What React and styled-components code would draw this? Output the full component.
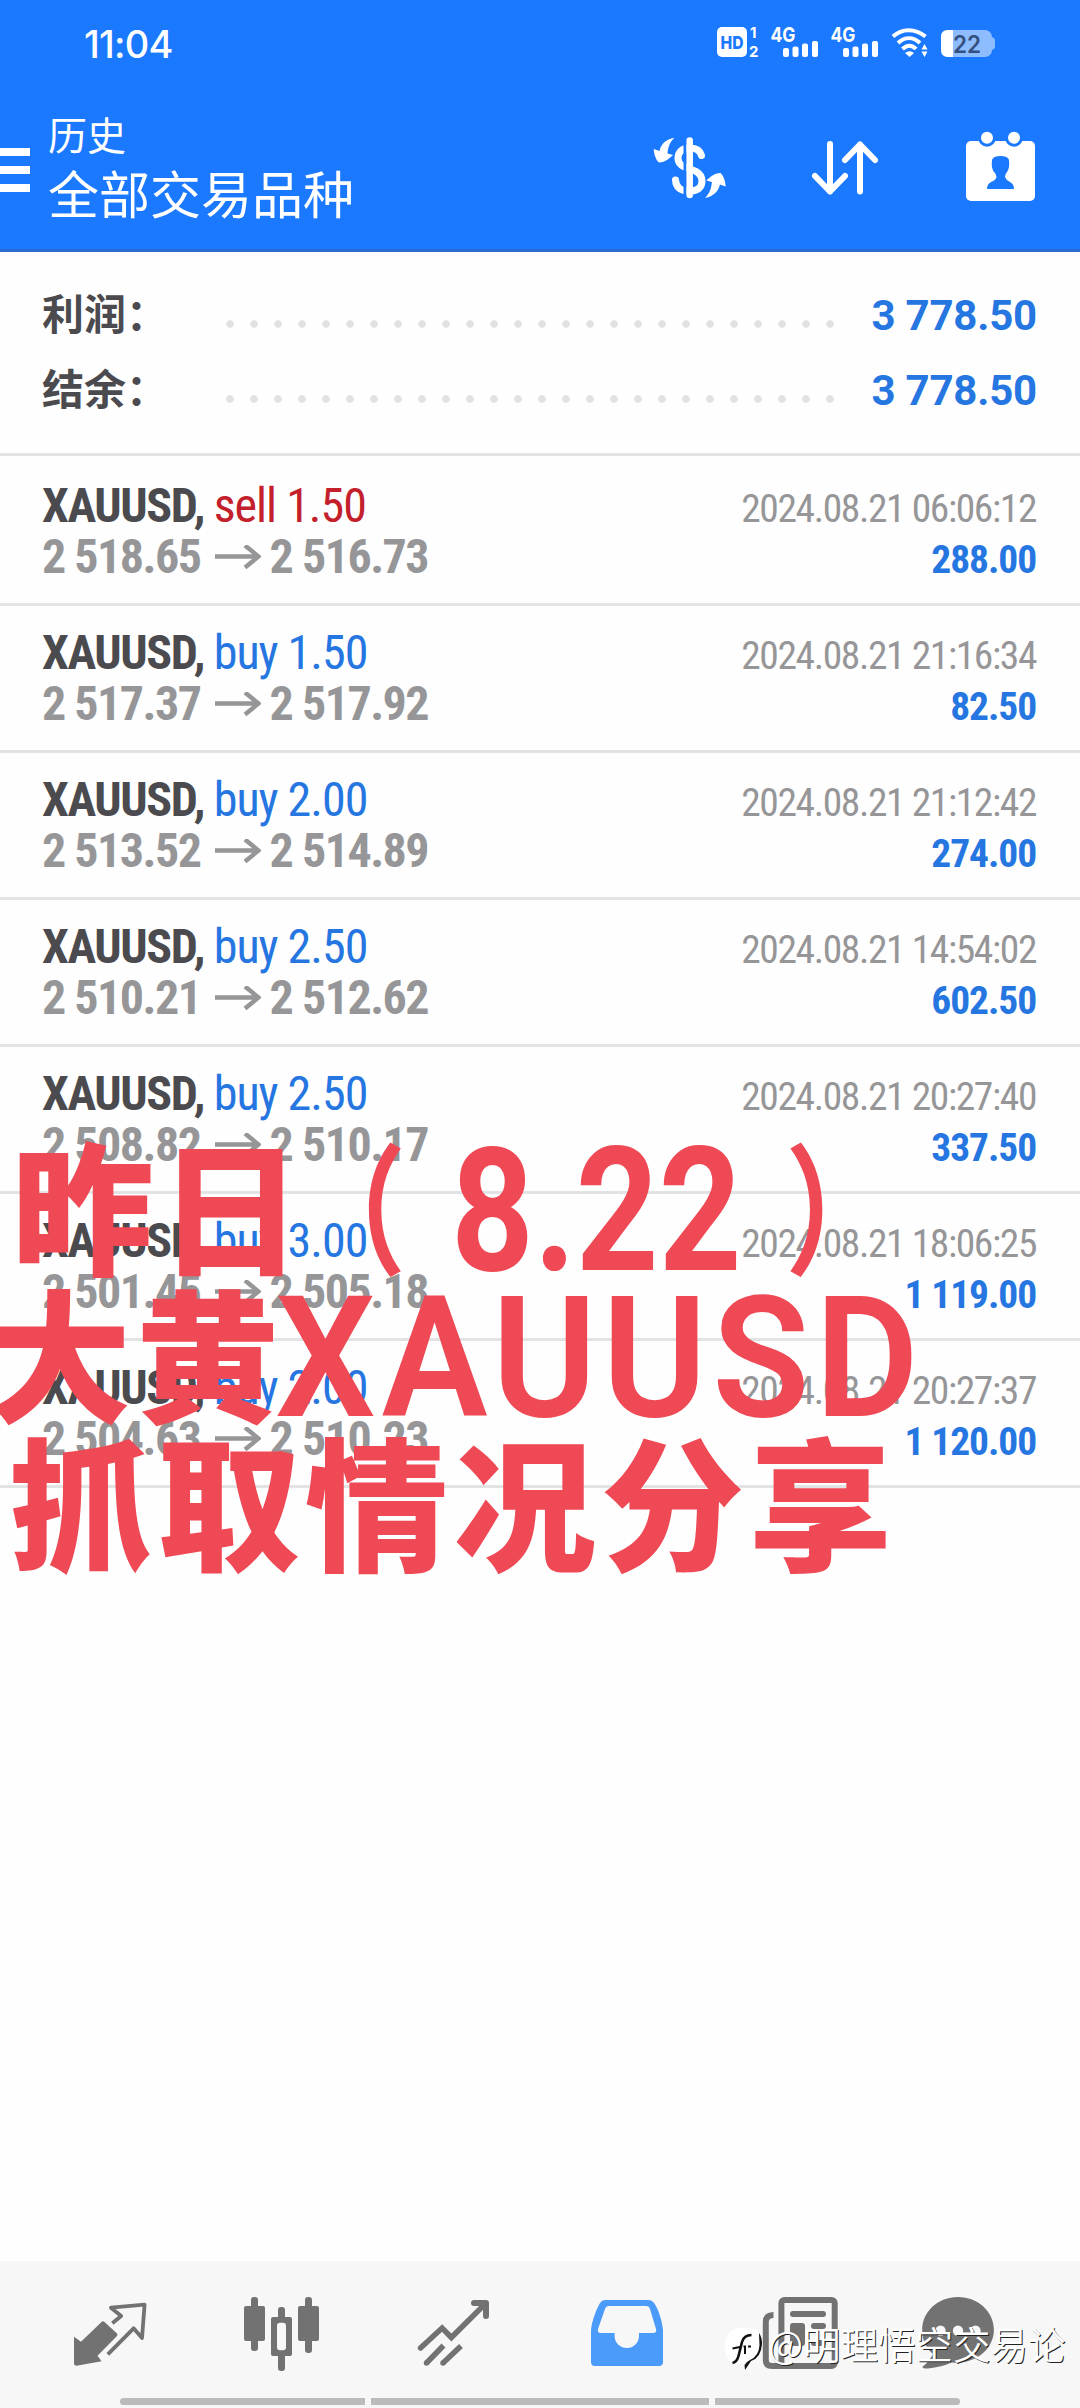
import styled, { createGlobalStyle } from 'styled-components';

const GlobalStyle = createGlobalStyle`
  * {
    box-sizing: border-box;
  }
  body {
    margin: 0;
    background: #fefefe;
    font-family: Roboto, "Noto Sans CJK SC", sans-serif;
  }
  svg {
    display: block;
  }
`;

const Page = styled.div`
  position: relative;
  display: flex;
  flex-direction: column;
  width: 1080px;
  height: 2408px;
  overflow: hidden;
`;

const Header = styled.header`
  height: 252px;
  background: #1b79ff;
  border-bottom: 3px solid #2a6bd0;
  color: #fff;
`;

const StatusBar = styled.div`
  display: flex;
  align-items: center;
  height: 88px;
  padding: 0 84px 0 84px;
`;

const Clock = styled.span`
  margin-right: auto;
  font-family: Inter, sans-serif;
  font-size: 38px;
  font-weight: 500;
  letter-spacing: -0.8px;
`;

const StatusIcons = styled.div`
  display: flex;
  gap: 10px;
`;

const Toolbar = styled.div`
  display: flex;
  align-items: flex-start;
  height: 161px;
  padding-right: 40px;
`;

const MenuButton = styled.div`
  display: flex;
  flex-direction: column;
  gap: 10px;
  width: 30px;
  margin: 60px 18px 0 0;
`;

const MenuBar = styled.span`
  height: 8px;
  background: #fff;
`;

const Titles = styled.div`
  flex: 1;
  padding-top: 24px;
`;

const Subtitle = styled.div`
  font-size: 39px;
  line-height: 50px;
`;

const Title = styled.div`
  font-size: 51px;
  line-height: 69px;
`;

const Actions = styled.div`
  display: flex;
  gap: 75px;
  padding-top: 38px;
`;

const Summary = styled.section`
  height: 204px;
  padding: 26px 43px 0 42px;
  border-bottom: 3px solid #e3e3e3;
`;

const SummaryRow = styled.div`
  display: flex;
  align-items: center;
  height: 75px;
`;

const SummaryLabel = styled.span`
  width: 176px;
  padding-bottom: 9px;
  font-size: 42px;
  font-weight: 600;
  color: #4b4b4f;
`;

const Dots = styled.span`
  width: 624px;
  height: 24px;
  margin-top: 16px;
  background: radial-gradient(circle, #e2e2e4 3.4px, transparent 4.2px) 0 0 / 24px 24px;
`;

const SummaryValue = styled.span`
  flex: 1;
  text-align: right;
  font-size: 42px;
  font-weight: 700;
  letter-spacing: -0.2px;
  color: #2676e2;
`;

const Deal = styled.article`
  height: ${(p) => (p.$first ? 150 : 147)}px;
  padding: ${(p) => (p.$first ? 24 : 21)}px 44px 0 42px;
  border-bottom: 3px solid #e3e3e3;
  font-stretch: 75%;
`;

const DealLine = styled.div`
  display: flex;
  justify-content: space-between;
  align-items: baseline;
  height: 51px;
  line-height: 51px;
  letter-spacing: -1.4px;
  white-space: pre;
`;

const Symbol = styled.span`
  font-size: 48px;
  font-weight: 700;
  letter-spacing: -1.4px;
  color: #4b4b4f;
`;

const Side = styled.span`
  font-size: 48px;
  font-weight: 400;
  letter-spacing: -1px;
  color: ${(p) => (p.$sell ? '#c4202b' : '#2676e2')};
`;

const Prices = styled.span`
  display: flex;
  align-items: baseline;
  font-size: 48px;
  font-weight: 700;
  letter-spacing: -1.5px;
  color: #969698;
`;

const ArrowIcon = styled.svg`
  margin: 0 9px 0 14px;
`;

const DealTime = styled.span`
  font-size: 39.5px;
  color: #969698;
`;

const Profit = styled.span`
  font-size: 39.5px;
  font-weight: 700;
  letter-spacing: -1.1px;
  color: #2676e2;
`;

const Caption = styled.div`
  position: absolute;
  top: 1128px;
  left: -12px;
  color: #ef4955;
`;

const CaptionLine = styled.div`
  display: flex;
  height: 148px;
  line-height: 148px;
  white-space: pre;
`;

const Hanzi = styled.span`
  margin-left: ${(p) => p.$indent || 0}px;
  font-family: "Noto Sans CJK SC", sans-serif;
  font-size: 143px;
  font-weight: 900;
  letter-spacing: 5px;
`;

const Paren = styled.span`
  width: 140px;
  margin-left: ${(p) => p.$shift || 0}px;
  font-family: "Noto Sans CJK SC", sans-serif;
  font-size: 140px;
  font-weight: 600;
  transform: scaleX(0.78);
`;

const Latin = styled.span`
  width: ${(p) => p.$width}px;
  margin-left: ${(p) => p.$shift || 0}px;
  font-family: Roboto, sans-serif;
  font-size: ${(p) => p.$size}px;
  font-weight: ${(p) => p.$weight || 600};
  letter-spacing: ${(p) => p.$spacing || 0}px;
  transform: translateY(9px) scaleX(${(p) => p.$squeeze});
  transform-origin: left;
`;

const Nav = styled.nav`
  display: grid;
  grid-template-columns: 172px 172px 172px 173px 173px 144px;
  justify-items: center;
  height: 137px;
  margin-top: auto;
  padding: 35px 50px 0 24px;
  background: #f7f7f7;
`;

const GestureBar = styled.div`
  display: grid;
  grid-template-columns: 245px 338px 245px;
  gap: 6px;
  height: 10px;
  padding: 0 120px 3px;
  background: #f7f7f7;
`;

const GestureSegment = styled.span`
  background: #bbb;
  &:first-child {
    border-radius: 4px 0 0 4px;
  }
  &:last-child {
    border-radius: 0 4px 4px 0;
  }
`;

const Watermark = styled.div`
  position: absolute;
  left: 724px;
  top: 2318px;
  display: flex;
  align-items: flex-start;
  height: 54px;
  font-family: "Noto Sans CJK SC", sans-serif;
  font-size: 37.5px;
  font-weight: 350;
  line-height: 50px;
  color: #fff;
  text-shadow: 1px 1px 0 #222;
  white-space: nowrap;
`;

const deals = [
  { side: 'sell', lots: '1.50', open: '2 518.65', close: '2 516.73', time: '2024.08.21 06:06:12', profit: '288.00' },
  { side: 'buy', lots: '1.50', open: '2 517.37', close: '2 517.92', time: '2024.08.21 21:16:34', profit: '82.50' },
  { side: 'buy', lots: '2.00', open: '2 513.52', close: '2 514.89', time: '2024.08.21 21:12:42', profit: '274.00' },
  { side: 'buy', lots: '2.50', open: '2 510.21', close: '2 512.62', time: '2024.08.21 14:54:02', profit: '602.50' },
  { side: 'buy', lots: '2.50', open: '2 508.82', close: '2 510.17', time: '2024.08.21 20:27:40', profit: '337.50' },
  { side: 'buy', lots: '3.00', open: '2 501.45', close: '2 505.18', time: '2024.08.21 18:06:25', profit: '1 119.00' },
  { side: 'buy', lots: '2.00', open: '2 504.63', close: '2 510.23', time: '2024.08.21 20:27:37', profit: '1 120.00' },
];

const HdIcon = () => (
  <svg width="45" height="40" viewBox="0 0 45 40" fill="#fff" fontFamily="Inter, sans-serif">
    <rect x="2" y="3" width="30" height="30" rx="5" />
    <text x="5.5" y="24.5" fontSize="18" fontWeight="800" fill="#1b79ff" textLength="23" lengthAdjust="spacingAndGlyphs">HD</text>
    <text x="35" y="14" fontSize="15" fontWeight="700">1</text>
    <text x="34" y="33" fontSize="15" fontWeight="700">2</text>
  </svg>
);

const SignalIcon = () => (
  <svg width="50" height="40" viewBox="0 0 50 40" fill="#fff">
    <text x="0.5" y="17.5" fontSize="20" fontWeight="700" fontFamily="Inter, sans-serif" textLength="25" lengthAdjust="spacingAndGlyphs">4G</text>
    <rect x="13" y="24" width="6" height="9" rx="2" />
    <rect x="22.5" y="22.5" width="6" height="10.5" rx="2" />
    <rect x="32" y="19.5" width="6" height="13.5" rx="2" />
    <rect x="42" y="17" width="6" height="16" rx="2" />
  </svg>
);

const WifiIcon = () => (
  <svg width="40" height="40" viewBox="0 0 40 40" fill="none" stroke="#fff" strokeWidth="4">
    <path d="M3 12.5C12 4 25 4 35.5 12.5" />
    <path d="M8 19C15 12.5 23 12.5 30 19" />
    <path d="M12.5 25C17 20.5 22 20.5 26 25" />
    <path d="M15 29Q19.5 25.5 24 29L19.5 33z" fill="#fff" stroke="none" />
    <path d="M31.5 25.5L34.5 20L37.5 25.5zM31.5 27.5L34.5 33L37.5 27.5z" fill="#fff" stroke="none" />
  </svg>
);

const BatteryIcon = () => (
  <svg width="56" height="40" viewBox="0 0 56 40">
    <rect x="1" y="6" width="51" height="27" rx="7" fill="#8dbcff" />
    <path d="M52 13q3 1 3 3v7q0 2-3 3z" fill="#8dbcff" />
    <path d="M13 6H8Q1 6 1 13V26Q1 33 8 33H13z" fill="#fff" />
    <text x="13" y="28.5" fontSize="24" fontWeight="600" fill="#34507f" fontFamily="Inter, sans-serif" textLength="28" lengthAdjust="spacingAndGlyphs">22</text>
  </svg>
);

const CurrencyIcon = () => (
  <svg width="80" height="84" viewBox="0 -4 80 84" fill="#fff">
    <path d="M51.5 25.5C50 20 45 18 40 18C31 18 28 23 28 28C28 35 34 37 40 39C47 41 52 44 52 51C52 58 47 61 40 61C31 61 26 58 25.5 50" fill="none" stroke="#fff" strokeWidth="7" strokeLinecap="round" />
    <path d="M35 8V68" stroke="#1b79ff" strokeWidth="3" />
    <path d="M39.7 10.5V65" stroke="#fff" strokeWidth="6.5" strokeLinecap="round" />
    <path id="turn" d="M24.3 7.7C16 9 11 14 9.5 21L3.7 19C4 26 7 31 9 32.5C14 32.5 19 29 23 25L17.5 23.5C18 17 20 12 24.3 7.7z" />
    <use href="#turn" transform="rotate(180 39.7 37.8)" />
  </svg>
);

const SortIcon = () => (
  <svg width="80" height="84" viewBox="0 -4 80 84" fill="none" stroke="#fff" strokeWidth="6" strokeLinecap="round" strokeLinejoin="round">
    <path d="M25 14V61.5M10 46L25 61.5L40 46" />
    <path d="M55 61.5V14.5M40 30L55 14.5L70 30" />
  </svg>
);

const CalendarIcon = () => (
  <svg width="80" height="84" viewBox="0 0 80 84" fill="#fff">
    <rect x="6" y="15" width="69" height="60" rx="5" />
    <circle cx="27" cy="11.7" r="9" fill="#1b79ff" />
    <circle cx="54" cy="11.7" r="9" fill="#1b79ff" />
    <circle cx="27" cy="11.7" r="6" />
    <circle cx="54" cy="11.7" r="6" />
    <path d="M32 34Q33 30 40.5 30T49 34Q50 42 47 46Q45 48 45 51Q46 54 50 56Q54 58 54 63H27Q27 58 31 56Q36 54 36.5 51Q36.5 48 34 46Q31 42 32 34z" fill="#1b79ff" />
  </svg>
);

const PriceArrow = () => (
  <ArrowIcon width="46" height="28" viewBox="0 0 46 28" fill="none" stroke="#969698" strokeWidth="4.5">
    <path d="M0 11.5H43M30 0.5L43.5 11.5L30 22.5" />
  </ArrowIcon>
);

const QuotesIcon = () => (
  <svg width="76" height="76" viewBox="0 0 76 76">
    <path d="M40.3 27.3L49.2 20L38.9 11.7L72.6 8.7L70 42L61.6 32.3L35.8 58.3" fill="none" stroke="#727272" strokeWidth="3.8" strokeLinejoin="round" />
    <path d="M2 40.7L9 45.7L29.5 26Q31 24.5 32.5 26L45 37.5Q46 39 45 40L25.5 59.7L29.6 65.3L4.4 69.7Q2 69.7 2 67z" fill="#727272" />
  </svg>
);

const ChartIcon = () => (
  <svg width="76" height="76" viewBox="0 0 76 76" fill="#727272">
    <rect x="0" y="10" width="21" height="35" rx="2" />
    <rect x="7" y="1" width="7" height="54" rx="3" />
    <rect x="34" y="11" width="7" height="64" rx="3" />
    <rect x="27" y="21" width="21" height="39" rx="2" />
    <rect x="33" y="26.7" width="9" height="27.5" rx="3" fill="#f7f7f7" />
    <rect x="54" y="10" width="21" height="35" rx="2" />
    <rect x="61" y="1" width="7" height="56" rx="3" />
  </svg>
);

const TradeIcon = () => (
  <svg width="76" height="76" viewBox="0 0 76 76" fill="none" stroke="#727272" strokeWidth="5.5">
    <path d="M4.5 52L26.1 32L35.4 41.5L69 8" strokeLinecap="round" />
    <path d="M58 7H70V20" strokeWidth="6" strokeLinecap="round" strokeLinejoin="round" />
    <path d="M10.5 67L27.5 49.5M27 67L45 50" />
    <path d="M10.5 67h.01M27 67h.01" strokeLinecap="round" />
  </svg>
);

const HistoryIcon = () => (
  <svg width="76" height="76" viewBox="0 0 76 76">
    <path d="M2 66V34C3 24 8 12 11 7q2-3 5-3H59q4 0 6 3C69 12 73 24 74 34V66q0 4-4 4H6q-4 0-4-4z" fill="#4b9bfb" />
    <path d="M20 10H57q3 0 4 3L67 33q1 4-3 4H50V40a12.2 12 0 0 1-24.4 0V37H12q-4 0-3-4L16 13q1-3 4-3z" fill="#f7f7f7" />
  </svg>
);

const NewsIcon = () => (
  <svg width="76" height="76" viewBox="0 0 76 76" fill="#727272">
    <path d="M11.5 19Q3.8 19 3.8 26V64Q3.8 70 10 70H66" fill="none" stroke="#727272" strokeWidth="6" />
    <rect x="19.4" y="4" width="53.3" height="66" rx="3" fill="#f7f7f7" stroke="#727272" strokeWidth="6" />
    <rect x="28" y="15" width="36" height="6" rx="3" />
    <rect x="28" y="27" width="15" height="23" rx="3" />
    <rect x="49" y="27" width="15" height="6" rx="3" />
    <rect x="49" y="44" width="15" height="6" rx="3" />
  </svg>
);

const ChatIcon = () => (
  <svg width="76" height="76" viewBox="0 0 76 76" fill="#727272">
    <path d="M38 1C18 1 2.2 15.5 2.2 34C2.2 44 6 52 13 58Q9 66 2.2 71Q3 73 8 72.5Q22 71 31.5 66.5C55 69 73.9 53 73.9 34C73.9 15.5 58 1 38 1z" />
    <circle cx="20.5" cy="34.7" r="5.2" fill="#f7f7f7" />
    <circle cx="38" cy="34.7" r="5.2" fill="#f7f7f7" />
    <circle cx="55.5" cy="34.7" r="5.2" fill="#f7f7f7" />
  </svg>
);

const WatermarkLogo = () => (
  <svg width="44" height="54" viewBox="0 0 44 54">
    <path d="M16 10H26Q38 11 38 25Q38 40 28 43L21 51V46H14Q1 45 1 29Q1 11 16 10z" fill="#fff" />
    <path d="M35 15Q38 19 38 26Q37 40 27 43L21 52L20.5 47Q22 44 26 42Q35 38 35.5 27Z" fill="#111" />
    <path d="M8.5 45Q13 44 14.5 38L18 24Q20 17 27.5 17" fill="none" stroke="#111" strokeWidth="2.6" />
    <path d="M8.5 30.5L16 29M19.5 28.5H21V36M24 28.5H27" fill="none" stroke="#111" strokeWidth="2" />
  </svg>
);

const DealRow = ({ deal, first }) => (
  <Deal $first={first}>
    <DealLine>
      <span>
        <Symbol>XAUUSD, </Symbol>
        <Side $sell={deal.side === 'sell'}>{deal.side} {deal.lots}</Side>
      </span>
      <DealTime>{deal.time}</DealTime>
    </DealLine>
    <DealLine>
      <Prices>
        {deal.open}
        <PriceArrow />
        {deal.close}
      </Prices>
      <Profit>{deal.profit}</Profit>
    </DealLine>
  </Deal>
);

const App = () => {
  return (
    <>
      <GlobalStyle />
      <Page>
        <Header>
          <StatusBar>
            <Clock>11:04</Clock>
            <StatusIcons>
              <HdIcon />
              <SignalIcon />
              <SignalIcon />
              <WifiIcon />
              <BatteryIcon />
            </StatusIcons>
          </StatusBar>
          <Toolbar>
            <MenuButton>
              <MenuBar />
              <MenuBar />
              <MenuBar />
            </MenuButton>
            <Titles>
              <Subtitle>历史</Subtitle>
              <Title>全部交易品种</Title>
            </Titles>
            <Actions>
              <CurrencyIcon />
              <SortIcon />
              <CalendarIcon />
            </Actions>
          </Toolbar>
        </Header>

        <Summary>
          <SummaryRow>
            <SummaryLabel>利润：</SummaryLabel>
            <Dots />
            <SummaryValue>3 778.50</SummaryValue>
          </SummaryRow>
          <SummaryRow>
            <SummaryLabel>结余：</SummaryLabel>
            <Dots />
            <SummaryValue>3 778.50</SummaryValue>
          </SummaryRow>
        </Summary>

        {deals.map((deal, i) => (
          <DealRow key={i} deal={deal} first={i === 0} />
        ))}

        <Nav>
          <QuotesIcon />
          <ChartIcon />
          <TradeIcon />
          <HistoryIcon />
          <NewsIcon />
          <ChatIcon />
        </Nav>
        <GestureBar>
          <GestureSegment />
          <GestureSegment />
          <GestureSegment />
        </GestureBar>

        <Caption>
          <CaptionLine>
            <Hanzi $indent={23}>昨日</Hanzi>
            <Paren $shift={-26}>（</Paren>
            <Latin $width={332} $shift={30} $size={172} $weight={700} $squeeze={0.84}>8.22</Latin>
            <Paren $shift={-13}>）</Paren>
          </CaptionLine>
          <CaptionLine>
            <Hanzi>大黄</Hanzi>
            <Latin $width={660} $shift={-9} $size={168} $squeeze={0.947} $spacing={6}>XAUUSD</Latin>
          </CaptionLine>
          <CaptionLine>
            <Hanzi $indent={21}>抓取情况分享</Hanzi>
          </CaptionLine>
        </Caption>

        <Watermark>
          <WatermarkLogo />
          @明理悟空交易论
        </Watermark>
      </Page>
    </>
  );
};

export default App;
